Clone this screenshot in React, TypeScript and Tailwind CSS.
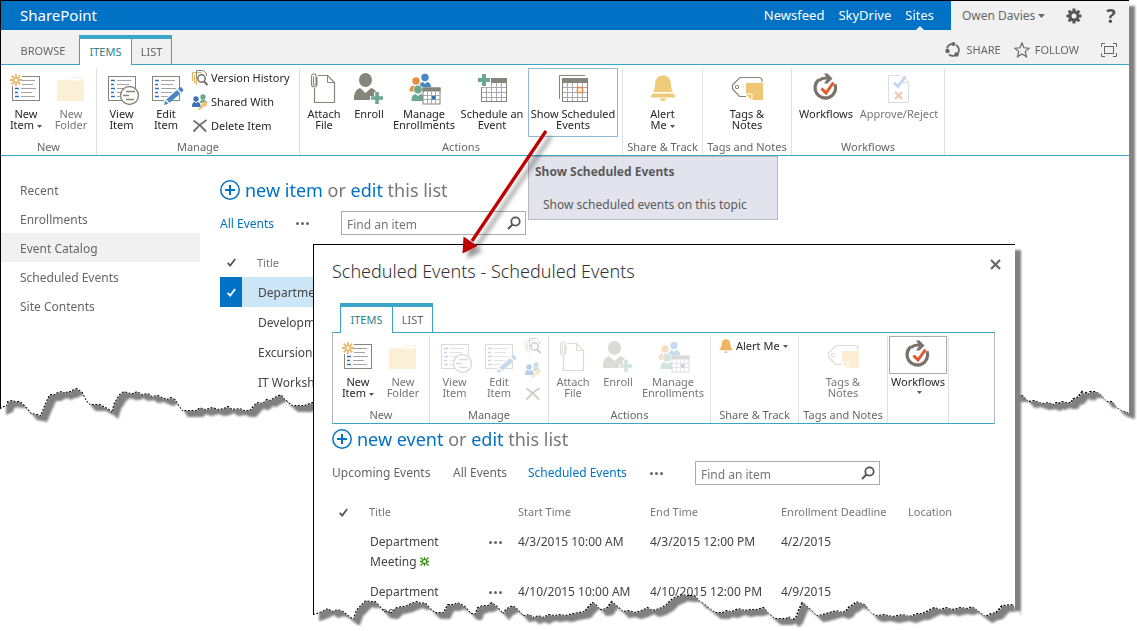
import type { ReactNode } from "react";
import clsx from "clsx";

type Point = [number, number];

interface RibbonButtonProps {
  icon: ReactNode;
  label: string;
  width: string;
  caret?: boolean;
  disabled?: boolean;
  active?: boolean;
}

interface EventRow {
  id: number;
  start: string;
  end: string;
  deadline: string;
}

const pageEdge: Point[] = [
  [0, 409], [4, 407], [7, 406], [8, 402], [12, 401], [15, 402], [20, 402], [24, 406], [27, 409], [31, 414], [37, 415],
  [41, 416], [45, 406], [50, 395], [55, 395], [58, 393], [62, 392], [65, 394], [68, 392], [71, 392], [74, 390], [77, 389],
  [82, 393], [86, 401], [90, 405], [100, 405], [105, 408], [108, 409], [112, 413], [115, 403], [120, 395], [124, 392],
  [130, 394], [134, 394], [137, 392], [142, 395], [148, 394], [152, 397], [158, 396], [162, 398], [167, 400], [171, 398],
  [175, 400], [178, 405], [182, 411], [192, 411], [197, 411], [200, 408], [205, 410], [213, 408], [218, 410], [224, 409],
  [228, 407], [232, 410], [240, 409], [244, 411], [250, 411], [257, 403], [263, 404], [267, 400], [270, 401], [275, 398],
  [281, 395], [285, 400], [292, 406], [305, 406], [313, 403], [1023, 396], [1029, 402], [1035, 401], [1043, 404],
  [1049, 403], [1054, 405], [1057, 403], [1059, 404], [1063, 402], [1067, 403], [1072, 403], [1074, 399], [1078, 398],
  [1083, 392], [1085, 395], [1087, 393], [1089, 395], [1091, 392], [1097, 392], [1102, 396], [1107, 402], [1113, 402],
  [1117, 408], [1122, 411], [1129, 413],
];

const dialogEdge: Point[] = [
  [0, 371], [4, 370], [9, 368], [15, 365], [19, 368], [25, 366], [30, 368], [35, 372], [39, 375], [41, 375], [44, 366],
  [49, 361], [53, 357], [57, 358], [62, 358], [66, 362], [71, 368], [79, 369], [84, 364], [90, 363], [94, 362], [98, 360],
  [104, 358], [108, 360], [112, 359], [117, 365], [122, 369], [131, 369], [135, 361], [141, 361], [145, 359], [152, 363],
  [158, 370], [163, 370], [165, 364], [170, 362], [175, 362], [179, 359], [184, 363], [190, 370], [194, 365], [200, 362],
  [205, 366], [210, 372], [217, 371], [220, 374], [226, 372], [230, 374], [236, 371], [242, 372], [247, 371], [253, 372],
  [260, 370], [266, 369], [272, 368], [276, 363], [280, 359], [283, 361], [287, 366], [294, 365], [299, 358], [305, 363],
  [310, 368], [316, 367], [322, 369], [329, 367], [335, 364], [340, 367], [347, 365], [354, 361], [360, 355], [365, 353],
  [369, 351], [375, 352], [382, 352], [387, 358], [391, 360], [397, 365], [402, 369], [410, 369], [414, 367], [419, 368],
  [426, 365], [432, 367], [437, 366], [444, 366], [451, 364], [455, 369], [462, 375], [474, 375], [476, 373], [480, 377],
  [484, 373], [487, 365], [490, 359], [497, 365], [504, 372], [510, 371], [517, 369], [524, 367], [530, 369], [534, 367],
  [537, 363], [541, 361], [544, 358], [552, 361], [559, 370], [564, 372], [572, 371], [580, 373], [590, 371], [597, 373],
  [605, 370], [610, 370], [614, 368], [622, 364], [628, 366], [634, 364], [640, 366], [648, 364], [655, 365], [660, 363],
  [665, 367], [673, 373], [679, 370], [684, 369], [690, 362], [701, 361], [702, 367],
];

const siteLinks = ["Recent", "Enrollments", "Event Catalog", "Scheduled Events", "Site Contents"];

const catalog = ["Department Meeting", "Development", "Excursion", "IT Workshop"];

const events: EventRow[] = [
  { id: 1, start: "4/3/2015 10:00 AM", end: "4/3/2015 12:00 PM", deadline: "4/2/2015" },
  { id: 2, start: "4/10/2015 10:00 AM", end: "4/10/2015 12:00 PM", deadline: "4/9/2015" },
];

// Paper sheet with a ragged bottom edge. x positions scale with the sheet's width.
function TornSheet({ edge, children }: { edge: Point[]; children: ReactNode }) {
  const span = edge[edge.length - 1][0];
  const ragged = [...edge].reverse().map(([x, y]) => `${(x / span) * 100}% ${y}px`);
  return (
    <div className="[filter:drop-shadow(6px_6px_1px_#808080)]">
      <div
        className="relative border-l border-t border-black bg-white"
        style={{ clipPath: `polygon(0 0, 100% 0, ${ragged.join(", ")})` }}
      >
        {children}
        <svg
          className="pointer-events-none absolute -left-px -top-px h-[420px] w-full"
          viewBox={`0 0 ${span} 420`}
          preserveAspectRatio="none"
          aria-hidden="true"
        >
          <polyline
            points={edge.map((p) => p.join(",")).join(" ")}
            fill="none"
            stroke="#000"
            strokeWidth="2"
            strokeDasharray="2 1.500"
          />
        </svg>
      </div>
    </div>
  );
}

function Icon({ children }: { children: ReactNode }) {
  return (
    <svg className="h-8 w-8 shrink-0 overflow-visible" viewBox="0 0 32 32" fill="none" aria-hidden="true">
      {children}
    </svg>
  );
}

function SmallIcon({ children }: { children: ReactNode }) {
  return (
    <svg className="h-4 w-4 shrink-0 overflow-visible" viewBox="0 0 16 16" fill="none" aria-hidden="true">
      {children}
    </svg>
  );
}

function FormLines() {
  return (
    <>
      <rect x="2.5" y="4.5" width="27" height="24" fill="#fff" stroke="#85857a" />
      <path d="M5 8.5h4M5 12.5h3M5 16.5h4M5 20.5h3M5 24.5h4" stroke="#2f74b5" strokeWidth="1.3" />
      <path d="M11 8.5h14M11 12.5h12M11 16.5h15M11 20.5h11M11 24.5h14" stroke="#a3a3ad" />
    </>
  );
}

function NewItemIcon() {
  return (
    <Icon>
      <FormLines />
      <rect x="0" y="1" width="12" height="13" fill="#fff" />
      <path
        d="M6 2v3.200M6 10.800V14M0 8h3.200M8.800 8H12M1.700 3.700l2.400 2.400M7.900 9.900l2.400 2.400M10.300 3.700L7.900 6.100M4.100 9.900l-2.400 2.400"
        stroke="#eab56a"
        strokeWidth="1.8"
      />
      <circle cx="6" cy="8" r="2.300" stroke="#eab56a" strokeWidth="1.400" fill="#fff" />
    </Icon>
  );
}

function FolderIcon() {
  return (
    <Icon>
      <path d="M2 8h13l3-3h11v24H2z" fill="#fcefd8" />
      <path d="M15.500 8.500l3-2.500H28v2.500z" fill="#fff" />
    </Icon>
  );
}

function ViewItemIcon() {
  return (
    <Icon>
      <FormLines />
      <circle cx="23.500" cy="23.500" r="9" fill="#fff" stroke="#85857a" strokeWidth="1.400" />
      <path d="M20 19.500h9M17 23.500h6M20 27.500h8" stroke="#85857a" strokeWidth="1.700" />
    </Icon>
  );
}

function EditItemIcon() {
  return (
    <Icon>
      <FormLines />
      <path d="M13 33l1.500-5.500L28.500 15.500l4 4L18 31.500z" fill="#fff" />
      <path d="M14 33l1.200-4.500 3.300 3.300zM16.200 27.500L27 18l3.500 3.500-11 9.300zM28 17l1.500-1.500q1-.8 2 0l1.500 1.500q.8 1 0 2L31.500 20.500z" fill="#4a86c5" />
    </Icon>
  );
}

function AttachIcon() {
  return (
    <Icon>
      <path d="M6.500 16v14.500h20V10.500l-7-7H10" stroke="#85857a" strokeWidth="1.200" />
      <path d="M19.500 3.500v7h7" stroke="#85857a" />
      <path d="M5.500 4.500v7.500q0 1.200 1.200 1.200T8 12V4q0-2.300-2-2.300T3.500 4v8q0 3 2.800 3t2.700-3V5" stroke="#85857a" strokeWidth="1.100" />
    </Icon>
  );
}

function EnrollIcon() {
  return (
    <Icon>
      <ellipse cx="12.500" cy="8" rx="6.500" ry="7" fill="#85857a" />
      <path d="M1 28q-.5-10 6-12l5.500 5 5.500-5q4 1 5 4h-2v4h-4v4z" fill="#85857a" />
      <path d="M24 20v12M18 26h12" stroke="#6aa893" strokeWidth="3.600" />
    </Icon>
  );
}

function CalendarGrid() {
  return (
    <>
      <rect x="5.500" y="6.500" width="25" height="23" fill="#fff" stroke="#85857a" />
      <rect x="5" y="6" width="26" height="5" fill="#85857a" />
      <path d="M10.500 11v18M15.500 11v18M20.500 11v18M25.500 11v18M6 15.500h24M6 20.500h24M6 25.500h24" stroke="#a9a9b3" />
    </>
  );
}

function ManageEnrollmentsIcon() {
  return (
    <Icon>
      <circle cx="17" cy="5.500" r="3.700" fill="#4a86c5" />
      <path d="M11.500 15q0-4.500 3.500-5l2 2 2-2q4 .5 4 5z" fill="#4a86c5" />
      <circle cx="8" cy="9" r="3.700" fill="#e88c3d" />
      <path d="M1.500 19.500q0-5.500 4-6l2 1.500 4 4.500z" fill="#e88c3d" />
      <circle cx="10" cy="17.500" r="4.700" fill="#fff" />
      <circle cx="10" cy="17.500" r="3.900" fill="#6aa893" />
      <path d="M3.500 29q-.5-6 4-7l2.500 2 2.500-2 2.500 1v6z" fill="#6aa893" />
      <rect x="15" y="16" width="17" height="16" fill="#fff" stroke="#85857a" />
      <rect x="14.500" y="15.500" width="18" height="4" fill="#85857a" />
      <path d="M19.500 20v12M23.500 20v12M27.500 20v12M15 23.500h17M15 27.500h17" stroke="#a9a9b3" />
      <rect x="24" y="24" width="3.500" height="3.500" fill="#2f74b5" />
    </Icon>
  );
}

function ScheduleIcon() {
  return (
    <Icon>
      <CalendarGrid />
      <path d="M8 1v14M1 8h14" stroke="#fff" strokeWidth="6" />
      <path d="M8 2v12M2 8h12" stroke="#6aa893" strokeWidth="4" />
    </Icon>
  );
}

function ShowScheduledIcon() {
  return (
    <Icon>
      <path d="M2.500 27V3.500H28" stroke="#85857a" />
      <CalendarGrid />
      <rect x="20.500" y="15.500" width="5" height="5" fill="#fff" stroke="#e88c3d" strokeWidth="1.500" />
    </Icon>
  );
}

function BellIcon() {
  return (
    <Icon>
      <path
        d="M16 3.500q7.500 0 8 9 .2 5.500 2 7.500H6q1.800-2 2-7.500.5-9 8-9zM6 21.500h20q2.500 1 2 4H4q-.5-3 2-4zM12.500 26.500h7q-1 2.500-3.500 2.500t-3.500-2.500z"
        fill="#eecb78"
      />
    </Icon>
  );
}

function TagsIcon() {
  return (
    <Icon>
      <path d="M31 10V9q0-3.500-3.500-3.500H9L1.500 13v4L8.500 24.500H15" stroke="#85857a" strokeWidth="1.200" />
      <circle cx="6" cy="15" r="1.700" stroke="#85857a" />
      <path d="M15 11h17v17H21.500v-6.500H15z" fill="#f0c675" />
      <path d="M15 22.500h5.500V28z" fill="#f0c675" />
    </Icon>
  );
}

function WorkflowsIcon() {
  return (
    <Icon>
      <path d="M8.700 7.800A10.300 10.300 0 1 0 25 12.200" stroke="#7a7268" strokeWidth="3.300" />
      <path d="M9 8.500q4-3.500 9.500-2.300" stroke="#7a7268" strokeWidth="3" />
      <path d="M14 1.500h3.500l5 5-5 5H14l3.500-5z" fill="#7a7268" />
      <path d="M11.500 16.500l4.500 4.500 7.500-10.500" stroke="#e2582f" strokeWidth="3" />
    </Icon>
  );
}

function ApproveIcon() {
  return (
    <Icon>
      <path d="M17.500 3.500h-12v27h20v-20" stroke="#dcdcdc" />
      <path d="M20.500 5v5.500h5M20.500 4.500l5 5.500" stroke="#dcdcdc" />
      <path d="M11 10.500l4 4L22.500 4.500" stroke="#c5d9ee" strokeWidth="3" />
      <path d="M12 20l7 7M19 20l-7 7" stroke="#f3c5b8" strokeWidth="2.200" />
    </Icon>
  );
}

function VersionHistoryIcon() {
  return (
    <SmallIcon>
      <path d="M.500 11V2.500H10M2.500 13V4.500" stroke="#eab56a" strokeWidth="1.200" />
      <path d="M4.500 14.500V.500h7l3 3V6" stroke="#85857a" />
      <path d="M4.500 8v6.500" stroke="#eab56a" strokeWidth="1.300" />
      <circle cx="9.500" cy="8.500" r="3.700" fill="#fff" stroke="#6b6b64" strokeWidth="1.400" />
      <path d="M12 11.500l3.500 3.500" stroke="#6b6b64" strokeWidth="2" />
    </SmallIcon>
  );
}

function SharedWithIcon() {
  return (
    <SmallIcon>
      <circle cx="11" cy="3" r="2.700" fill="#6aa893" />
      <path d="M8 9q0-3.500 3-3.500T15.500 9z" fill="#6aa893" />
      <circle cx="4" cy="5" r="2.700" fill="#3f72b5" />
      <path d="M0 13q-.2-5 3-5l1.200 1.200L5.500 8Q9 8.500 8.500 13z" fill="#3f72b5" />
      <circle cx="12.500" cy="10" r="2.600" fill="#f0c675" />
      <path d="M11.500 11L7 15.500" stroke="#eab56a" strokeWidth="2" />
    </SmallIcon>
  );
}

function DeleteIcon() {
  return (
    <SmallIcon>
      <path d="M1.500 2.500q7 4.500 12.500 11M14.500 2Q8 6 1.500 13.500" stroke="#73736c" strokeWidth="2" />
    </SmallIcon>
  );
}

function Caret() {
  return (
    <svg className="ml-[3px] inline-block h-[3px] w-[5px] align-middle" viewBox="0 0 5 3" aria-hidden="true">
      <path d="M0 0h5L2.500 3z" fill="#555" />
    </svg>
  );
}

function Check({ color }: { color: string }) {
  return (
    <svg className="h-[9px] w-[9px]" viewBox="0 0 9 9" fill="none" aria-hidden="true">
      <path d="M.700 4.800l2.500 2.700L8.200 1" stroke={color} strokeWidth="1.800" />
    </svg>
  );
}

function Dots() {
  return (
    <button type="button" aria-label="More options" className="flex h-5 items-center">
      <svg className="h-[3px] w-[13px]" viewBox="0 0 13 3" fill="#666" aria-hidden="true">
        <circle cx="1.500" cy="1.500" r="1.500" />
        <circle cx="6.500" cy="1.500" r="1.500" />
        <circle cx="11.500" cy="1.500" r="1.500" />
      </svg>
    </button>
  );
}

function Tabs({ children }: { children?: ReactNode }) {
  return (
    <div className="flex items-end text-[11px]">
      {children}
      <button
        type="button"
        className="relative -mb-px h-[30px] w-[53px] border-x border-t-4 border-[#38a5c9] bg-white text-[#31818f]"
      >
        ITEMS
      </button>
      <button type="button" className="h-[29px] w-10 border-r border-t-4 border-[#38a5c9] pt-px text-[#666]">
        LIST
      </button>
    </div>
  );
}

function RibbonGroup({ label, width, children }: { label: string; width: string; children: ReactNode }) {
  return (
    <section className={clsx("flex h-[87px] shrink-0 flex-col border-r border-[#e1e1e1]", width)}>
      <div className="flex flex-1 items-start">{children}</div>
      <h3 className="whitespace-nowrap text-center text-[11px] leading-4 text-[#666]">{label}</h3>
    </section>
  );
}

function RibbonButton({ icon, label, width, caret, disabled, active }: RibbonButtonProps) {
  return (
    <button
      type="button"
      disabled={disabled}
      className={clsx(
        "flex h-[69px] shrink-0 flex-col items-center border pt-[3px] text-[11px] leading-[11px]",
        width,
        active ? "border-[#92b9d8]" : "border-transparent",
        disabled ? "text-[#777]" : "text-[#262626]",
      )}
    >
      {icon}
      <span className="mt-1 whitespace-pre">
        {label}
        {caret && <Caret />}
      </span>
    </button>
  );
}

function SmallButton({ icon, label, iconOnly }: { icon: ReactNode; label: string; iconOnly?: boolean }) {
  return (
    <button
      type="button"
      aria-label={label}
      disabled={iconOnly}
      className="flex h-6 items-center gap-[3px] whitespace-nowrap text-[11px] text-[#262626]"
    >
      {icon}
      {!iconOnly && label}
    </button>
  );
}

function Faded({ children }: { children: ReactNode }) {
  return <span className="opacity-30">{children}</span>;
}

function ListHeading({ noun }: { noun: string }) {
  return (
    <div className="flex h-[30px] items-center whitespace-nowrap text-lg text-[#777]">
      <button type="button" className="flex items-center gap-[5px] text-[#0072c6]">
        <svg className="h-5 w-5" viewBox="0 0 20 20" fill="none" stroke="#0072c6" aria-hidden="true">
          <circle cx="10" cy="10" r="9.200" strokeWidth="1.500" />
          <path d="M10 5v10M5 10h10" strokeWidth="2" />
        </svg>
        new {noun}
      </button>
      <span>
        &nbsp;or <a href="#edit" className="text-[#0072c6]">edit</a> this list
      </span>
    </div>
  );
}

function SearchBox() {
  return (
    <form className="flex h-6 w-[185px] items-center border border-[#ababab] bg-white pl-[5px] pr-1">
      <input
        aria-label="Find an item"
        placeholder="Find an item"
        className="h-full min-w-0 flex-1 pt-0.5 text-xs outline-none placeholder:text-[#777]"
      />
      <button type="button" aria-label="Search">
        <svg className="h-[14px] w-[14px]" viewBox="0 0 14 14" fill="none" stroke="#555" aria-hidden="true">
          <circle cx="8.500" cy="5.500" r="4.200" strokeWidth="1.800" />
          <path d="M5.500 8.500L1 13" strokeWidth="2" />
        </svg>
      </button>
    </form>
  );
}

function Tick({ label, color, checked }: { label: string; color: string; checked?: boolean }) {
  return (
    <label className="flex items-center justify-center">
      <input type="checkbox" className="sr-only" aria-label={label} defaultChecked={checked} />
      <Check color={color} />
    </label>
  );
}

function TopBar() {
  return (
    <header className="flex h-[29px] bg-[#0072c6] text-white">
      <div className="flex flex-1 items-center justify-between pl-[19px] pr-[17px]">
        <h1 className="text-[15px]">SharePoint</h1>
        <nav className="flex h-full items-center gap-[14px] pt-px text-[13px]">
          <a href="#newsfeed">Newsfeed</a>
          <a href="#skydrive">SkyDrive</a>
          <a href="#sites" className="relative flex h-full items-center">
            Sites
            <svg className="absolute bottom-0 left-1/2 h-1 w-2 -translate-x-1/2" viewBox="0 0 8 4" aria-hidden="true">
              <path d="M4 0l4 4H0z" fill="#f1f1f1" />
            </svg>
          </a>
        </nav>
      </div>
      <div className="flex w-[178px] items-center justify-between bg-[#f1f1f1] pl-[11px] pr-2.5 text-[#666]">
        <button type="button" className="flex items-center gap-[3px] whitespace-nowrap pt-px text-xs">
          Owen Davies
          <svg className="h-1 w-[7px]" viewBox="0 0 7 4" aria-hidden="true">
            <path d="M0 0h7L3.500 4z" fill="#666" />
          </svg>
        </button>
        <button type="button" aria-label="Settings">
          <svg className="h-4 w-4" viewBox="0 0 16 16" fill="none" stroke="#555" aria-hidden="true">
            <circle cx="8" cy="8" r="4" strokeWidth="3" />
            <path
              d="M8 .500v3M8 12.500v3M.500 8h3M12.500 8h3M2.700 2.700l2 2M11.300 11.300l2 2M13.300 2.700l-2 2M4.700 11.300l-2 2"
              strokeWidth="3"
            />
          </svg>
        </button>
        <button type="button" aria-label="Help" className="w-4 text-xl leading-7 font-bold text-[#555]">?</button>
      </div>
    </header>
  );
}

function PageActions() {
  return (
    <div className="flex h-full flex-1 items-center justify-end pr-3 pt-1.5 text-[11px] text-[#666]">
      <button type="button" className="mr-[13px] flex items-center gap-[5px]">
        <svg className="h-4 w-4" viewBox="0 0 16 16" fill="none" stroke="#666" aria-hidden="true">
          <path d="M2 6.500a6 6 0 0 1 5-4.700M11 3a6 6 0 0 1 2 8.500M10 13.500a6 6 0 0 1-6-1" strokeWidth="1.700" />
          <circle cx="8.500" cy="2" r="1.900" fill="#666" stroke="none" />
          <circle cx="2.500" cy="9" r="2.200" fill="#666" stroke="none" />
          <circle cx="11.500" cy="12.500" r="2.200" fill="#666" stroke="none" />
        </svg>
        SHARE
      </button>
      <button type="button" className="mr-[22px] flex items-center gap-[5px]">
        <svg className="h-4 w-4" viewBox="0 0 16 16" fill="none" stroke="#666" strokeWidth="1.200" aria-hidden="true">
          <path d="M8 1l2 4.800 5.200.400-4 3.400 1.300 5.200L8 12l-4.500 2.800 1.300-5.200-4-3.400L6 5.800z" />
        </svg>
        FOLLOW
      </button>
      <button type="button" aria-label="Focus on content">
        <svg className="h-[14px] w-4" viewBox="0 0 16 14" fill="none" stroke="#666" aria-hidden="true">
          <path d="M.500 4V.500H4M12 .500h3.500V4M15.500 10v3.500H12M4 13.500H.500V10" />
          <rect x="3.500" y="3.500" width="9" height="7" />
        </svg>
      </button>
    </div>
  );
}

function PageRibbon() {
  return (
    <div className="relative flex h-[91px] border-b border-[#38a5c9] pt-[3px]">
      <RibbonGroup label="New" width="w-[96px]">
        <div className="w-0.5" />
        <RibbonButton icon={<NewItemIcon />} label={"New\nItem"} width="w-[46px]" caret />
        <RibbonButton icon={<FolderIcon />} label={"New\nFolder"} width="w-11" disabled />
      </RibbonGroup>
      <RibbonGroup label="Manage" width="w-[203px]">
        <div className="w-0.5" />
        <RibbonButton icon={<ViewItemIcon />} label={"View\nItem"} width="w-[45px]" />
        <RibbonButton icon={<EditItemIcon />} label={"Edit\nItem"} width="w-11" />
        <div className="-mt-0.5 pl-1">
          <SmallButton icon={<VersionHistoryIcon />} label="Version History" />
          <SmallButton icon={<SharedWithIcon />} label="Shared With" />
          <SmallButton icon={<DeleteIcon />} label="Delete Item" />
        </div>
      </RibbonGroup>
      <RibbonGroup label="Actions" width="w-[323px]">
        <RibbonButton icon={<AttachIcon />} label={"Attach\nFile"} width="w-12" />
        <RibbonButton icon={<EnrollIcon />} label="Enroll" width="w-[42px]" />
        <RibbonButton icon={<ManageEnrollmentsIcon />} label={"Manage\nEnrollments"} width="w-[68px]" />
        <RibbonButton icon={<ScheduleIcon />} label={"Schedule an\nEvent"} width="w-[68px]" />
        <div className="w-0.5" />
        <RibbonButton icon={<ShowScheduledIcon />} label={"Show Scheduled\nEvents"} width="w-[90px]" active />
      </RibbonGroup>
      <RibbonGroup label="Share & Track" width="w-[80px]">
        <RibbonButton icon={<BellIcon />} label={"Alert\nMe"} width="w-full" caret />
      </RibbonGroup>
      <RibbonGroup label="Tags and Notes" width="w-[89px]">
        <RibbonButton icon={<TagsIcon />} label={"Tags &\nNotes"} width="w-full" />
      </RibbonGroup>
      <RibbonGroup label="Workflows" width="w-[153px]">
        <RibbonButton icon={<WorkflowsIcon />} label="Workflows" width="w-[68px]" />
        <RibbonButton icon={<ApproveIcon />} label="Approve/Reject" width="w-[78px]" disabled />
      </RibbonGroup>
      <div
        role="tooltip"
        className="absolute left-[527px] top-[91px] h-16 w-[250px] border border-[#b9b9c0] bg-[#e3e3ed] px-1.5 text-xs leading-[17px] text-[#5a5a5a]"
      >
        <p className="mt-1.5 font-bold">Show Scheduled Events</p>
        <p className="mt-4 pl-2">Show scheduled events on this topic</p>
      </div>
    </div>
  );
}

function SitePage() {
  return (
    <TornSheet edge={pageEdge}>
      <TopBar />
      <div className="flex h-[35px] items-end border-b border-[#38a5c9] bg-[#f1f1f1]">
        <Tabs>
          <button type="button" className="h-[29px] w-[78px] pl-[6px] pt-1 text-[#666]">BROWSE</button>
        </Tabs>
        <PageActions />
      </div>
      <PageRibbon />
      <div className="flex pb-6 pt-[19px]">
        <nav className="w-[199px] shrink-0">
          <ul className="text-xs text-[#666]">
            {siteLinks.map((link) => (
              <li key={link}>
                <a
                  href="#list"
                  className={clsx(
                    "flex h-[29px] items-center pl-[19px] pt-0.5",
                    link === "Event Catalog" && "bg-[#f1f1f1]",
                  )}
                >
                  {link}
                </a>
              </li>
            ))}
          </ul>
        </nav>
        <main className="w-full max-w-[600px] pl-5">
          <ListHeading noun="item" />
          <div className="mt-1.5 flex items-center text-xs">
            <a href="#all" className="w-[76px] pt-0.5 text-[#0072c6]">All Events</a>
            <Dots />
            <div className="w-8" />
            <SearchBox />
          </div>
          <table className="mt-3 w-full table-fixed text-left text-xs text-[#444]">
            <thead>
              <tr className="h-[30px] text-[11px] text-[#777]">
                <th className="w-[22px]"><Tick label="Select all" color="#555" /></th>
                <th className="pl-[15px] pt-0.5 font-normal">Title</th>
              </tr>
            </thead>
            <tbody>
              {catalog.map((title, i) => (
                <tr key={title} className={clsx("h-[30px]", i === 0 && "bg-[#cde6f7]")}>
                  <td className={clsx(i === 0 && "bg-[#0072c6]")}>
                    {i === 0 && <Tick label={`Select ${title}`} color="#fff" checked />}
                  </td>
                  <td className="pl-4 pt-0.5">{title}</td>
                </tr>
              ))}
            </tbody>
          </table>
        </main>
      </div>
    </TornSheet>
  );
}

function DialogRibbon() {
  return (
    <div className="flex h-[92px] border border-[#38a5c9] border-x-[#b5b5bb] pt-[3px]">
      <RibbonGroup label="New" width="w-[97px]">
        <div className="w-0.5" />
        <RibbonButton icon={<NewItemIcon />} label={"New\nItem"} width="w-[46px]" caret />
        <RibbonButton icon={<FolderIcon />} label={"New\nFolder"} width="w-11" disabled />
      </RibbonGroup>
      <RibbonGroup label="Manage" width="w-[119px]">
        <div className="w-0.5" />
        <RibbonButton icon={<Faded><ViewItemIcon /></Faded>} label={"View\nItem"} width="w-[45px]" disabled />
        <RibbonButton icon={<Faded><EditItemIcon /></Faded>} label={"Edit\nItem"} width="w-11" disabled />
        <div className="-mt-0.5 pl-1 opacity-35">
          <SmallButton icon={<VersionHistoryIcon />} label="Version History" iconOnly />
          <SmallButton icon={<SharedWithIcon />} label="Shared With" iconOnly />
          <SmallButton icon={<DeleteIcon />} label="Delete Item" iconOnly />
        </div>
      </RibbonGroup>
      <RibbonGroup label="Actions" width="w-[162px]">
        <RibbonButton icon={<Faded><AttachIcon /></Faded>} label={"Attach\nFile"} width="w-12" disabled />
        <RibbonButton icon={<Faded><EnrollIcon /></Faded>} label="Enroll" width="w-[42px]" disabled />
        <RibbonButton
          icon={<Faded><ManageEnrollmentsIcon /></Faded>}
          label={"Manage\nEnrollments"}
          width="w-[68px]"
          disabled
        />
      </RibbonGroup>
      <RibbonGroup label="Share & Track" width="w-[88px]">
        <button type="button" className="flex h-5 items-center whitespace-nowrap pl-2 text-[11px] text-[#262626]">
          <svg className="mr-[3px] h-[14px] w-[14px]" viewBox="4 3 24 26" aria-hidden="true">
            <path
              d="M16 3.500q7.500 0 8 9 .2 5.500 2 7.500H6q1.800-2 2-7.500.5-9 8-9zM6 20h20q2.500 1 2 4H4q-.5-3 2-4zM12.500 26h7q-1 3-3.500 3t-3.500-3z"
              fill="#efb662"
            />
          </svg>
          Alert Me
          <Caret />
        </button>
      </RibbonGroup>
      <RibbonGroup label="Tags and Notes" width="w-[89px]">
        <RibbonButton icon={<Faded><TagsIcon /></Faded>} label={"Tags &\nNotes"} width="w-full" disabled />
      </RibbonGroup>
      <RibbonGroup label="" width="w-[61px]">
        <button type="button" className="flex w-full flex-col items-center text-[11px] leading-[11px] text-[#262626]">
          <span className="flex h-[38px] w-[58px] items-center justify-center border border-[#ababb0]">
            <WorkflowsIcon />
          </span>
          <span className="mb-1 mt-0.5">Workflows</span>
          <Caret />
        </button>
      </RibbonGroup>
    </div>
  );
}

function EventsDialog() {
  return (
    <TornSheet edge={dialogEdge}>
      <div role="dialog" aria-labelledby="dialog-title" className="pl-[18px] pr-5">
        <div className="flex h-[58px] items-start justify-between">
          <h2 id="dialog-title" className="mt-[14px] text-lg leading-6 font-light text-[#333]">
            Scheduled Events - Scheduled Events
          </h2>
          <button type="button" aria-label="Close" className="-mr-[6px] mt-[14px]">
            <svg className="h-[11px] w-[11px]" viewBox="0 0 11 11" fill="none" stroke="#666" aria-hidden="true">
              <path d="M1 1l9 9M10 1l-9 9" strokeWidth="2.200" />
            </svg>
          </button>
        </div>
        <div className="pl-2">
          <Tabs />
        </div>
        <DialogRibbon />
        <ListHeading noun="event" />
        <div className="mt-[7px] flex items-center text-xs text-[#666]">
          <a href="#upcoming" className="w-[121px]">Upcoming Events</a>
          <a href="#all-events" className="w-[75px]">All Events</a>
          <a href="#scheduled" className="w-[122px] text-[#0072c6]">Scheduled Events</a>
          <Dots />
          <div className="w-8" />
          <SearchBox />
        </div>
        <table className="mt-3 w-full table-fixed text-left text-xs leading-5 text-[#444]">
          <thead>
            <tr className="h-[30px] whitespace-nowrap text-[11px] text-[#777]">
              <th className="w-[22px]"><Tick label="Select all events" color="#555" /></th>
              <th className="w-[135px] pl-[15px] font-normal">Title</th>
              <th className="w-[29px]" />
              <th className="w-[132px] font-normal">Start Time</th>
              <th className="w-[131px] font-normal">End Time</th>
              <th className="w-[127px] font-normal">Enrollment Deadline</th>
              <th className="font-normal">Location</th>
            </tr>
          </thead>
          <tbody>
            {events.map((event) => (
              <tr key={event.id} className="align-top">
                <td />
                <td className="py-[5px] pl-4 pr-5">
                  Department Meeting{" "}
                  <svg className="inline h-[9px] w-[9px] align-baseline" viewBox="0 0 9 9" fill="none" stroke="#3c8f10" aria-hidden="true">
                    <path
                      d="M.500.500l2 2M8.500.500l-2 2M.500 8.500l2-2M8.500 8.500l-2-2M4.500 0v2M4.500 7v2M0 4.500h2M7 4.500h2"
                      strokeWidth="1.300"
                    />
                    <circle cx="4.500" cy="4.500" r="2.200" strokeWidth="1.300" />
                  </svg>
                </td>
                <td className="py-[5px]"><Dots /></td>
                <td className="whitespace-nowrap py-[5px]">{event.start}</td>
                <td className="whitespace-nowrap py-[5px]">{event.end}</td>
                <td className="whitespace-nowrap py-[5px]">{event.deadline}</td>
                <td />
              </tr>
            ))}
          </tbody>
        </table>
      </div>
    </TornSheet>
  );
}

// Callout arrow from the ribbon command down to the dialog it opens.
function CalloutArrow() {
  return (
    <svg
      className="pointer-events-none absolute left-[455px] top-[125px] h-[145px] w-[110px] [filter:drop-shadow(5px_5px_2px_rgb(0_0_0/0.4))]"
      viewBox="0 0 110 145"
      aria-hidden="true"
    >
      <path d="M91 6L17 116" stroke="#c00000" strokeWidth="3.300" />
      <path d="M7.500 128.500l1-17L22.500 121z" fill="#c00000" />
    </svg>
  );
}

export default function App() {
  return (
    <div className="relative min-h-screen overflow-hidden bg-white pr-2 font-['Noto_Sans',sans-serif]">
      <SitePage />
      <div className="absolute left-[313px] right-[122px] top-[244px]">
        <EventsDialog />
      </div>
      <CalloutArrow />
    </div>
  );
}
